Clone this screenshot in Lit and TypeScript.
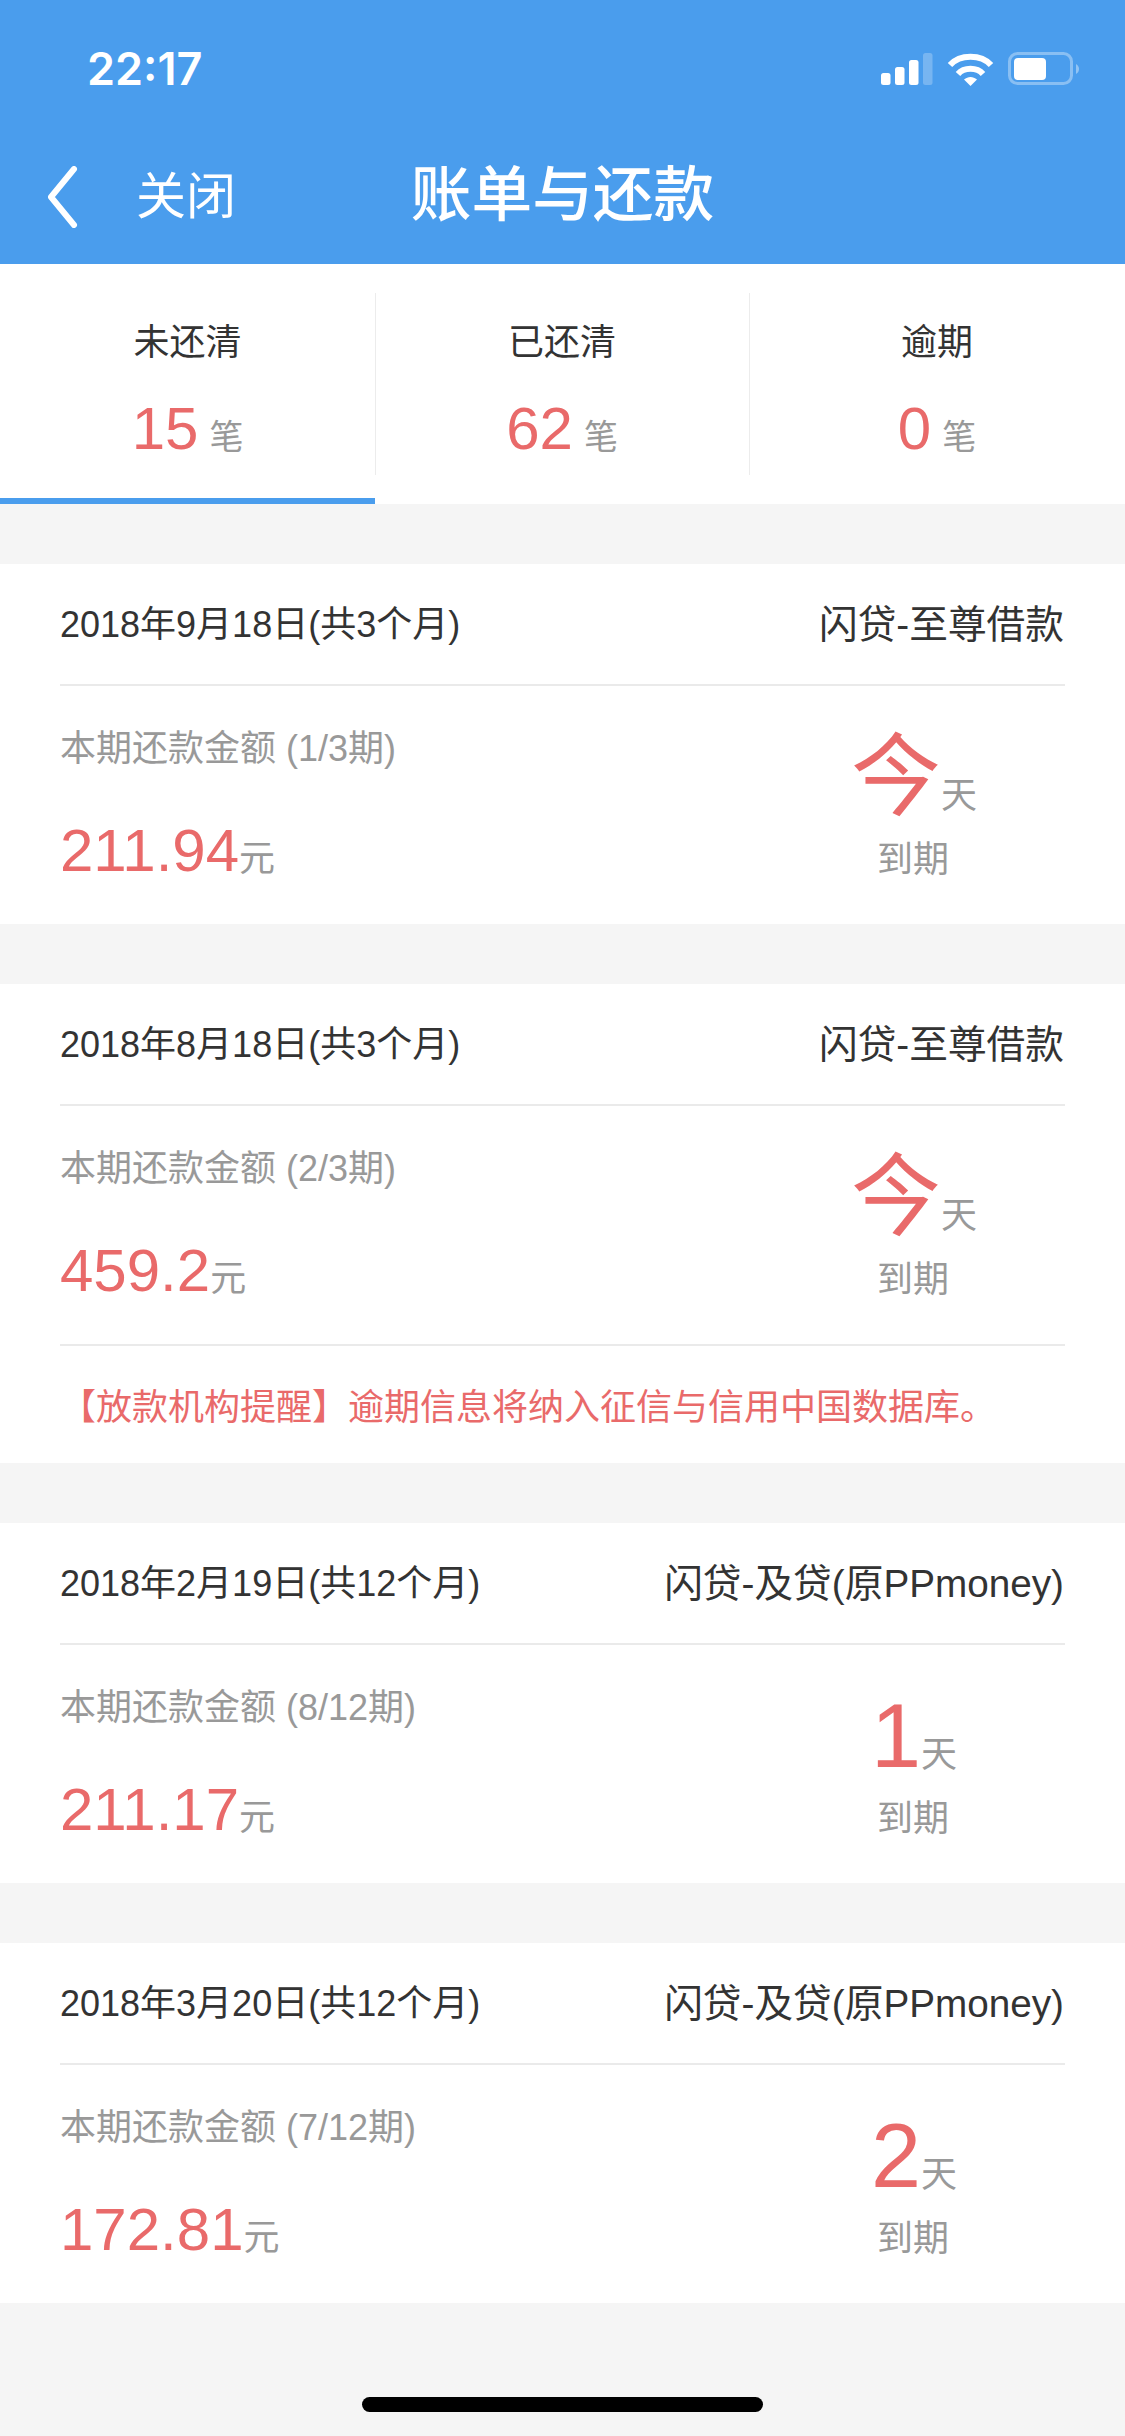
import { LitElement, html, css } from "lit";
import { customElement } from "lit/decorators.js";

interface Bill {
  date: string;
  product: string;
  period: string;
  amount: string;
  due: string;
  note?: string;
}

const BILLS: Bill[] = [
  { date: "2018年9月18日(共3个月)", product: "闪贷-至尊借款", period: "本期还款金额 (1/3期)", amount: "211.94", due: "今" },
  { date: "2018年8月18日(共3个月)", product: "闪贷-至尊借款", period: "本期还款金额 (2/3期)", amount: "459.2", due: "今", note: "【放款机构提醒】逾期信息将纳入征信与信用中国数据库。" },
  { date: "2018年2月19日(共12个月)", product: "闪贷-及贷(原PPmoney)", period: "本期还款金额 (8/12期)", amount: "211.17", due: "1" },
  { date: "2018年3月20日(共12个月)", product: "闪贷-及贷(原PPmoney)", period: "本期还款金额 (7/12期)", amount: "172.81", due: "2" },
];

const TABS = [
  { label: "未还清", count: "15", active: true },
  { label: "已还清", count: "62", active: false },
  { label: "逾期", count: "0", active: false },
];

@customElement("app-root")
export class AppRoot extends LitElement {
  static styles = css`
    :host {
      display: block;
      width: 1125px;
      height: 2436px;
      background: #f5f5f5;
      font-family: "Liberation Sans", "Noto Sans CJK SC", sans-serif;
      position: relative;
      overflow: hidden;
    }
    .top { background: #4a9ded; height: 264px; color: #fff; display: flex; flex-direction: column; }
    .status { height: 132px; display: flex; align-items: center; justify-content: space-between; padding: 4px 44px 0 87px; box-sizing: border-box; }
    .time { font: 600 45px/1 Inter, "Liberation Sans", sans-serif; }
    .status svg { display: block; margin-top: 6px; }
    .nav { flex: 1; display: grid; grid-template-columns: 1fr auto 1fr; align-items: center; padding-bottom: 2px; }
    .left { display: flex; align-items: center; padding-left: 46px; gap: 58px; }
    .close { font-size: 50px; line-height: 1; }
    .title { font-size: 60.7px; line-height: 1; font-weight: 500; margin-bottom: 3px; }
    .tabs { display: grid; grid-template-columns: 375px 374px 376px; height: 240px; background: #fff; }
    .tab { position: relative; display: flex; flex-direction: column; align-items: center; padding-top: 57px; box-sizing: border-box; }
    .tab + .tab::before { content: ""; position: absolute; left: 0; top: 29px; bottom: 29px; width: 1px; background: #ececec; }
    .tab.active::after { content: ""; position: absolute; left: 0; right: 0; bottom: 0; height: 6px; background: #4a9ded; }
    .tab-label { font-size: 36px; line-height: 44px; color: #333; }
    .tab-count { margin-top: 34px; line-height: 60px; display: flex; align-items: baseline; gap: 11px; }
    .num { font-size: 60px; color: #e96a6a; line-height: 60px; }
    .unit { font-size: 34px; color: #999; }
    .card { background: #fff; margin-top: 60px; padding: 0 60px; }
    .head { height: 122px; box-sizing: border-box; padding-bottom: 6px; display: flex; align-items: center; justify-content: space-between; border-bottom: 2px solid #eaeaea; color: #333; }
    .date { font-size: 36px; }
    .product { font-size: 38.7px; margin-right: 1px; }
    .body { height: 238px; display: flex; justify-content: space-between; box-sizing: border-box; }
    .info { padding-top: 41px; }
    .period { font-size: 36px; line-height: 44px; color: #999; }
    .amount { margin-top: 50px; display: flex; align-items: baseline; }
    .unit-y { font-size: 36px; color: #999; }
    .due { width: 300px; margin-right: 2px; display: flex; flex-direction: column; align-items: center; padding-top: 41px; }
    .due-top { display: flex; align-items: baseline; height: 108px; margin-left: 2px; }
    .due-num { color: #e96a6a; line-height: 100px; font-size: 90px; }
    .due-day { font-size: 36px; color: #999; }
    .due-label { font-size: 36px; line-height: 44px; color: #999; margin-top: 3px; }
    .note { border-top: 2px solid #eaeaea; height: 119px; box-sizing: border-box; padding-bottom: 2px; display: flex; align-items: center; color: #e96a6a; font-size: 36px; }
    .home { position: absolute; left: 362px; top: 2397px; width: 401px; height: 15px; background: #000; border-radius: 8px; }
  `;

  private statusIcons() {
    return html`<svg width="200" height="40" viewBox="0 0 200 40">
      <g fill="#fff">
        <rect x="0" y="22" width="9.5" height="12" rx="2.5"></rect>
        <rect x="14" y="16" width="9.5" height="18" rx="2.5"></rect>
        <rect x="28" y="9" width="9.5" height="25" rx="2.5"></rect>
        <rect x="42" y="2" width="9.5" height="32" rx="2.5" opacity="0.25"></rect>
      </g>
      <g fill="none" stroke="#fff" stroke-width="6">
        <path d="M69 14 C79 3 100 3 110 14"></path>
        <path d="M77 23 C83 16 96 16 102 23"></path>
      </g>
      <path d="M83 28.5 C87 25 92 25 96 28.5 L89.5 35 Z" fill="#fff"></path>
      <rect x="128.5" y="2.5" width="62" height="30" rx="8" fill="none" stroke="#fff" stroke-opacity="0.35" stroke-width="3"></rect>
      <rect x="133" y="7" width="32" height="22" rx="4" fill="#fff"></rect>
      <path d="M195 13 C199 15 199 21 195 23 Z" fill="#fff" fill-opacity="0.4"></path>
    </svg>`;
  }

  private card(b: Bill) {
    return html`<section class="card">
      <div class="head"><span class="date">${b.date}</span><span class="product">${b.product}</span></div>
      <div class="body">
        <div class="info">
          <div class="period">${b.period}</div>
          <div class="amount"><span class="num">${b.amount}</span><span class="unit-y">元</span></div>
        </div>
        <div class="due">
          <div class="due-top"><span class="due-num">${b.due}</span><span class="due-day">天</span></div>
          <div class="due-label">到期</div>
        </div>
      </div>
      ${b.note ? html`<div class="note">${b.note}</div>` : ""}
    </section>`;
  }

  render() {
    return html`
      <header class="top">
        <div class="status"><span class="time">22:17</span>${this.statusIcons()}</div>
        <div class="nav">
          <div class="left">
            <svg width="32" height="62" viewBox="0 0 32 62"><path d="M28 3 L5 31 L28 59" fill="none" stroke="#fff" stroke-width="6" stroke-linecap="round" stroke-linejoin="round"></path></svg>
            <span class="close">关闭</span>
          </div>
          <div class="title">账单与还款</div>
          <div></div>
        </div>
      </header>
      <div class="tabs">
        ${TABS.map(t => html`<div class="tab ${t.active ? "active" : ""}">
          <div class="tab-label">${t.label}</div>
          <div class="tab-count"><span class="num">${t.count}</span><span class="unit">笔</span></div>
        </div>`)}
      </div>
      ${BILLS.map(b => this.card(b))}
      <div class="home"></div>
    `;
  }
}
